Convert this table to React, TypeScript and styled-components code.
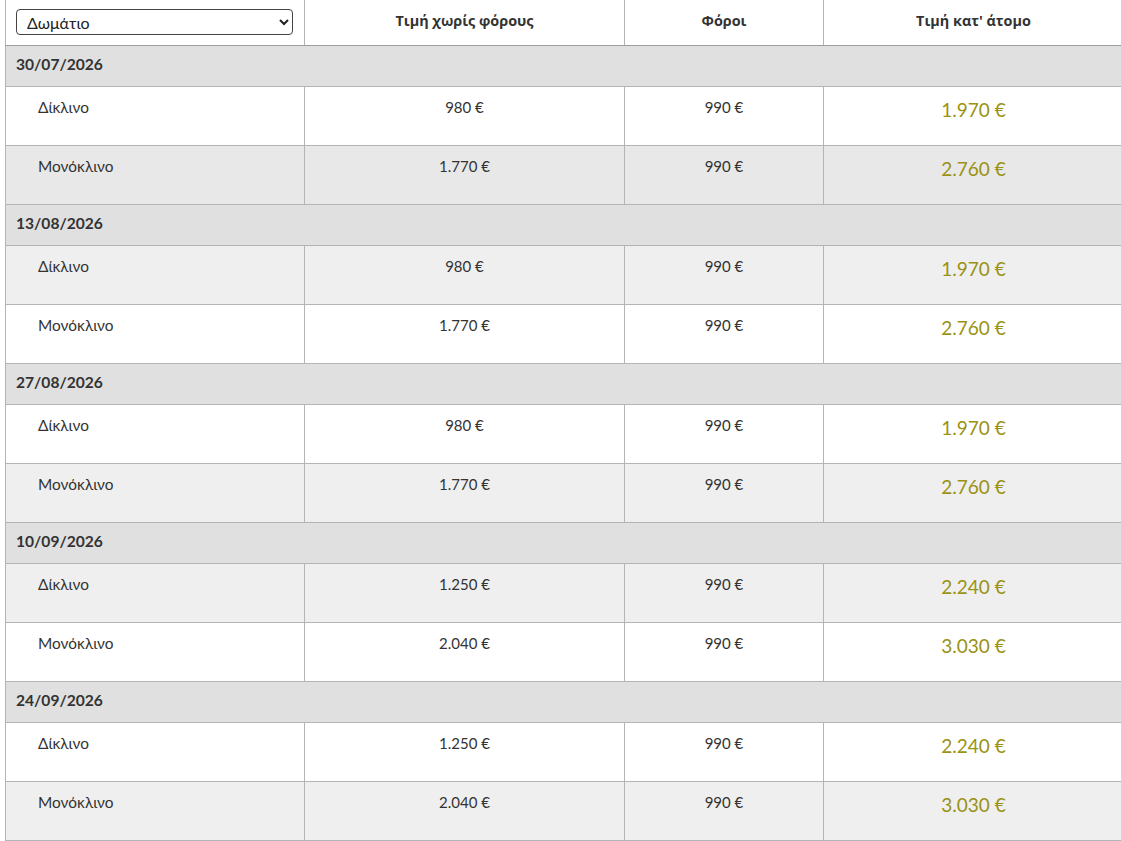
import React from "react";
import styled, { createGlobalStyle } from "styled-components";

const Global = createGlobalStyle`
  html, body { margin: 0; padding: 0; background: #fff; overflow: hidden; }
  body { font-family: "Lato", "Open Sans", sans-serif; color: #333; }
`;

const Page = styled.div`
  padding: 0 0 0 5px;
  width: 1130px;
`;

const Table = styled.table`
  width: 1118px;
  border-collapse: collapse;
  table-layout: fixed;
  border-left: 1px solid #b4b4b4;
`;

const HeadCell = styled.th<{ $w: number }>`
  width: ${(p) => p.$w}px;
  height: 45px;
  box-sizing: border-box;
  padding: 0 10px;
  vertical-align: top;
  padding-top: 11px;
  font-family: "Open Sans", sans-serif;
  font-weight: 700;
  font-size: 14.4px;
  color: #333;
  text-align: center;
  border-right: 1px solid #b4b4b4;
  border-bottom: 1px solid #9e9e9e;
  &:first-child { padding-top: 9px; }
`;

const RoomSelect = styled.select`
  display: block;
  width: 277px;
  height: 26px;
  box-sizing: border-box;
  border: 1px solid #444;
  border-radius: 4px;
  background: #fff;
  font-family: "Lato", "Open Sans", sans-serif;
  font-size: 16px;
  color: #222;
  padding: 0 6px;
`;

const DateRow = styled.tr`
  background: #e0e0e0;
`;

const DateCell = styled.td`
  height: 41px;
  box-sizing: border-box;
  padding: 0 10px 3px;
  font-weight: 700;
  font-size: 15.6px;
  color: #333;
  border-bottom: 1px solid #b4b4b4;
`;

const ItemRow = styled.tr<{ $bg: string }>`
  background: ${(p) => p.$bg};
`;

const Cell = styled.td`
  height: 59px;
  box-sizing: border-box;
  vertical-align: top;
  padding: 10px 10px 0;
  font-size: 15px;
  line-height: 20px;
  color: #333;
  text-align: center;
  border-right: 1px solid #b4b4b4;
  border-bottom: 1px solid #b4b4b4;
`;

const NameCell = styled(Cell)`
  text-align: left;
  padding-left: 32px;
  font-size: 15.4px;
`;

const TotalCell = styled(Cell)`
  padding-top: 11px;
  font-size: 19px;
  line-height: 24px;
  color: #9a9212;
`;

type Item = { name: string; base: string; tax: string; total: string; bg: string };
type Group = { date: string; items: Item[] };

const W = "#ffffff";
const G = "#efefef";

const groups: Group[] = [
  {
    date: "30/07/2026",
    items: [
      { name: "Δίκλινο", base: "980 €", tax: "990 €", total: "1.970 €", bg: W },
      { name: "Μονόκλινο", base: "1.770 €", tax: "990 €", total: "2.760 €", bg: "#e8e8e8" },
    ],
  },
  {
    date: "13/08/2026",
    items: [
      { name: "Δίκλινο", base: "980 €", tax: "990 €", total: "1.970 €", bg: G },
      { name: "Μονόκλινο", base: "1.770 €", tax: "990 €", total: "2.760 €", bg: W },
    ],
  },
  {
    date: "27/08/2026",
    items: [
      { name: "Δίκλινο", base: "980 €", tax: "990 €", total: "1.970 €", bg: W },
      { name: "Μονόκλινο", base: "1.770 €", tax: "990 €", total: "2.760 €", bg: G },
    ],
  },
  {
    date: "10/09/2026",
    items: [
      { name: "Δίκλινο", base: "1.250 €", tax: "990 €", total: "2.240 €", bg: G },
      { name: "Μονόκλινο", base: "2.040 €", tax: "990 €", total: "3.030 €", bg: W },
    ],
  },
  {
    date: "24/09/2026",
    items: [
      { name: "Δίκλινο", base: "1.250 €", tax: "990 €", total: "2.240 €", bg: W },
      { name: "Μονόκλινο", base: "2.040 €", tax: "990 €", total: "3.030 €", bg: G },
    ],
  },
];

export default function App() {
  return (
    <Page>
      <Global />
      <Table>
        <thead>
          <tr>
            <HeadCell $w={299}>
              <RoomSelect defaultValue="">
                <option value="">Δωμάτιο</option>
                <option value="d">Δίκλινο</option>
                <option value="m">Μονόκλινο</option>
              </RoomSelect>
            </HeadCell>
            <HeadCell $w={320}>Τιμή χωρίς φόρους</HeadCell>
            <HeadCell $w={199}>Φόροι</HeadCell>
            <HeadCell $w={300}>Τιμή κατ' άτομο</HeadCell>
          </tr>
        </thead>
        <tbody>
          {groups.map((g) => (
            <React.Fragment key={g.date}>
              <DateRow>
                <DateCell colSpan={4}>{g.date}</DateCell>
              </DateRow>
              {g.items.map((it) => (
                <ItemRow key={it.name} $bg={it.bg}>
                  <NameCell>{it.name}</NameCell>
                  <Cell>{it.base}</Cell>
                  <Cell>{it.tax}</Cell>
                  <TotalCell>{it.total}</TotalCell>
                </ItemRow>
              ))}
            </React.Fragment>
          ))}
        </tbody>
      </Table>
    </Page>
  );
}
